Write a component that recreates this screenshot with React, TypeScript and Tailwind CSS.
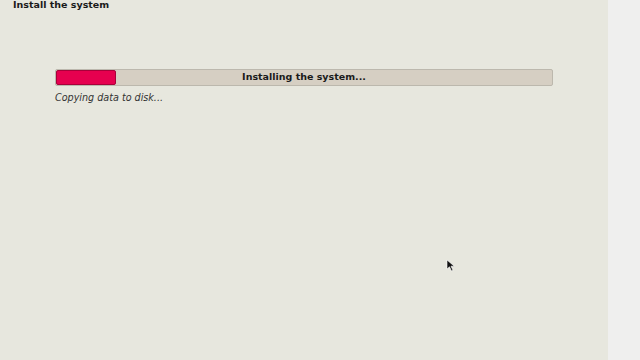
export default function App() {
  return (
    <div className="relative flex h-[360px] w-[640px] overflow-hidden bg-[#efefee] font-['DejaVu_Sans',sans-serif] text-[#1a1a1a]">
      <div className="flex h-full w-[608px] flex-col bg-[#e7e7de]">
        <div className="pl-[13px] text-[9.5px] font-bold leading-[10px]">Install the system</div>
        <div className="mt-[59px] pl-[55px] pr-[55px]">
          <div className="relative h-[17px] w-[498px] rounded-[2px] border border-[#bcb8ad] bg-[#d6cfc3]">
            <div className="absolute left-0 top-0 h-full w-[60px] rounded-[2px] border border-[#a8003a] bg-[#e6004f]" />
            <div className="relative flex h-full items-center justify-center text-[9.5px] font-bold">
              Installing the system...
            </div>
          </div>
          <div className="mt-[6px] text-[9.6px] leading-[11px] italic text-[#333]">Copying data to disk...</div>
        </div>
      </div>
      <svg className="absolute left-[446px] top-[259px]" width="10" height="14" viewBox="0 0 10 14">
        <path d="M1 1 L1 10 L3.5 7.8 L5.5 12 L7 11.3 L5 7.2 L8.3 7.2 Z" fill="#111" stroke="#fff" strokeWidth="0.6" />
      </svg>
    </div>
  );
}
